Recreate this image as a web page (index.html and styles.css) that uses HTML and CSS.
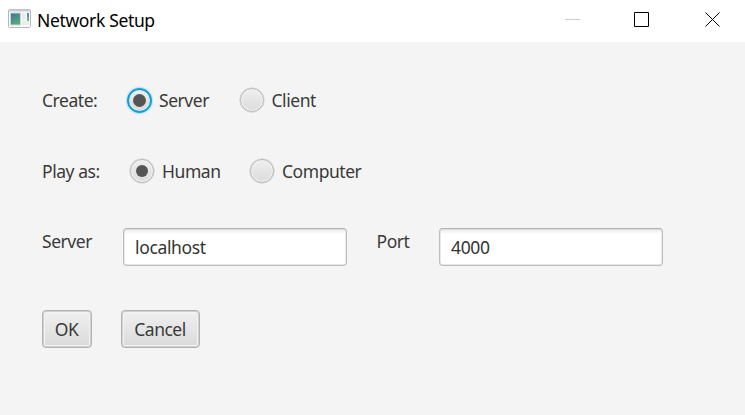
FILE: index.html
```html
<!DOCTYPE html>
<html lang="en"><head><meta charset="utf-8"><title>Network Setup</title><link rel="stylesheet" href="styles.css"></head>
<body>
<header class="titlebar">
<svg class="app-icon" width="23" height="19" viewBox="0 0 23 19"><defs><linearGradient id="g" x1="0" y1="0" x2="0.5" y2="1"><stop offset="0" stop-color="#3d719f"/><stop offset="1" stop-color="#5bab74"/></linearGradient><linearGradient id="h" x1="0" y1="0" x2="0" y2="1"><stop offset="0" stop-color="#4f83b5"/><stop offset="1" stop-color="#79bc8a"/></linearGradient></defs><rect x=".5" y=".5" width="22" height="18" rx="1" fill="#fafafa" stroke="#b4b8be"/><path d="M1 1.500H22" stroke="#c9cdd3" stroke-width="2"/><rect x="2.500" y="4" width="10" height="12" fill="url(#g)" stroke="#c5d5dc"/><rect x="14" y="4" width="3.500" height="7" fill="#e9e9e9"/><rect x="14" y="12" width="7" height="4" fill="#ececec"/><rect x="19" y="4" width="2" height="8" fill="url(#h)"/></svg>
<h1 class="title">Network Setup</h1>
<svg class="controls" width="158" height="16" viewBox="0 0 158 16" fill="none" stroke="#000"><path d="M0 8.500H15" stroke="#ccc"/><path d="M69.500 1.500H83.500V15.500H69.500Z"/><path d="M140.500 1.500L154.500 15.500M154.500 1.500L140.500 15.500"/></svg>
</header>
<main class="form">
<div class="row create"><span class="label">Create:</span><label class="option"><i class="radio checked focused"></i><span class="text">Server</span></label><label class="option"><i class="radio"></i><span class="text">Client</span></label></div>
<div class="row play"><span class="label">Play as:</span><label class="option"><i class="radio checked"></i><span class="text">Human</span></label><label class="option"><i class="radio"></i><span class="text">Computer</span></label></div>
<div class="row fields"><span class="label server">Server</span><input class="field" value="localhost"><span class="label port">Port</span><input class="field" value="4000"></div>
<div class="row actions"><button class="ok">OK</button><button class="cancel">Cancel</button></div>
</main>
</body></html>
```
FILE: styles.css
```css
*{box-sizing:border-box}
body{margin:0;width:745px;height:415px;overflow:hidden;background:#f4f4f4;color:#3a3a3a;font:17.5px/24px "Noto Sans",sans-serif;letter-spacing:-.45px}
.titlebar{height:42px;background:#fff;display:flex;align-items:center;padding:0 22px 4px 8px;color:#000}
.app-icon{margin:0 6px 2px 0}
.title{margin:0;padding-top:2px;font:400 17.5px/24px "Noto Sans",sans-serif;letter-spacing:-.35px}
.controls{margin-left:auto}
.form{padding:46px 42px}
.row{display:flex;align-items:center}
.create,.play{height:25px;margin-bottom:46px}
.create .label,.play .label,.text{padding-bottom:1px}
.create .label{width:85px}
.play .label{width:88px}
.play{margin-bottom:44px}
.play .label,.play .text{padding-bottom:2px}
.option{display:flex;align-items:flex-start;gap:7px;width:112.5px}
.play .option{width:120px}
.radio{width:24px;height:24px;margin-right:1px;border:1.5px solid #b8b8b8;border-radius:50%;background:linear-gradient(#efefef,#dbdbdb);box-shadow:0 0 0 .5px #c8c8c8,inset 0 0 0 1px #f4f4f4;display:grid;place-items:center}
.checked::after{content:"";width:12px;height:12px;border-radius:50%;background:#555}
.focused{width:25px;height:25px;margin-right:0;border:2px solid #149fd2;box-shadow:0 0 1px 1px #b5e0f0,inset 0 0 0 1px #d8edf5}
.focused::after{width:13px;height:13px}
.fields{align-items:flex-start;margin-bottom:44px}
.server{width:81px}
.port{width:62.5px}
.fields .label{padding-top:1px}
.field{width:224px;height:38px;border:1px solid #bebebe;border-top-color:#b3b3b3;border-radius:4px;padding:0 11px 0 11px;font:inherit;letter-spacing:-.35px;color:#333;background:linear-gradient(#e9e9e9,#fff 5px);box-shadow:inset 0 0 0 .5px #d0d0d0}
.field + .label{margin-left:29.5px}
.actions{gap:29px}
button{height:38px;padding:0 1px 1px 0;border:1px solid #b3b3b3;border-radius:4px;background:linear-gradient(#f0f0f0,#dadada);box-shadow:inset 0 0 0 1px #cfcfcf,inset 0 0 0 2px #f3f3f3;font:inherit;letter-spacing:-.5px;color:#3a3a3a}
.ok{width:50px}
.cancel{width:79px}
```
